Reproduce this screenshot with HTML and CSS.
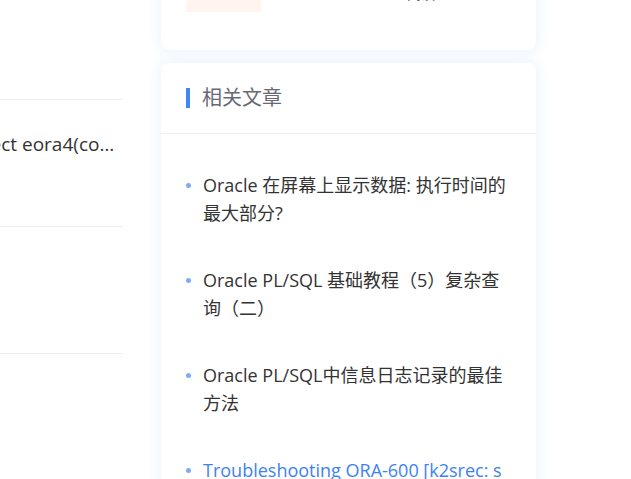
FILE: index.html
```html
<!DOCTYPE html>
<html lang="zh-CN">
<head>
    <meta charset="UTF-8">
    <meta name="viewport" content="width=device-width, initial-scale=1.0">
    <title>相关文章</title>
    <link rel="stylesheet" href="styles.css">
</head>
<body>
    <div class="page">
        <div class="main">
            <ul class="post-list">
                <li class="post">
                    <h3 class="post-title">Oracle 中的序列与触发器</h3>
                    <p class="post-meta">2020-03-16</p>
                </li>
                <li class="post">
                    <h3 class="post-title">在存储过程中动态执行查询语句时出现权限不足的错误提示之后我们尝试select eora4(contents) from dual</h3>
                    <p class="post-meta">2020-03-15</p>
                </li>
                <li class="post">
                    <h3 class="post-title">Oracle 表空间扩容</h3>
                    <p class="post-meta">2020-03-14</p>
                </li>
                <li class="post">
                    <h3 class="post-title">数据泵导入导出</h3>
                    <p class="post-meta">2020-03-12</p>
                </li>
            </ul>
        </div>

        <aside class="side">
            <div class="card card-info">
                <div class="info-row">
                    <span class="tag">置顶</span>
                    <span class="info-date">2020-03-18 · 阅读</span>
                </div>
            </div>

            <div class="card">
                <div class="card-head">
                    <h3 class="card-title">相关文章</h3>
                </div>
                <ul class="rel-list">
                    <li><a href="#">Oracle 在屏幕上显示数据: 执行时间的最大部分?</a></li>
                    <li><a href="#">Oracle PL/SQL 基础教程（5）复杂查询（二）</a></li>
                    <li><a href="#">Oracle PL/SQL中信息日志记录的最佳方法</a></li>
                    <li class="active"><a href="#">Troubleshooting ORA-600 [k2srec: smon] 错误排查</a></li>
                </ul>
            </div>
        </aside>
    </div>
</body>
</html>
```

FILE: styles.css
```css
body { margin: 0; background: #fff; color: #333; font-family: "Open Sans", "Noto Sans CJK SC", sans-serif; overflow: hidden; }
ul { list-style: none; margin: 0; padding: 0; }
a { text-decoration: none; color: inherit; }

.page { display: flex; align-items: flex-start; }

/* left column, scrolled mostly out of view */
.main { flex: none; width: 790px; margin-left: -642px; margin-top: -27px; padding-right: 25px; box-sizing: border-box; background: #fff; position: relative; z-index: 1; }
.post { padding: 30px 0 36px; border-bottom: 1px solid #eeeeee; }
.post-title { margin: 0; padding-right: 5px; font-size: 19px; font-weight: normal; line-height: 28px; white-space: nowrap; overflow: hidden; text-overflow: ellipsis; color: #333; }
.post-meta { margin: 10px 0 0; font-size: 13px; line-height: 22px; color: #999; }

/* sidebar */
.side { flex: none; width: 375px; margin-left: 13px; margin-top: -33px; }
.card { background: #fff; border-radius: 8px; box-shadow: 0 0 14px 3px #edf4ff; margin-bottom: 13px; }
.card-info { padding: 15px 25px 38px; }
.info-row { display: flex; align-items: flex-start; gap: 62px; }
.tag { width: 75px; line-height: 22px; padding-bottom: 8px; background: #fff5ee; color: #999; font-size: 14px; text-align: center; }
.info-date { font-size: 14px; line-height: 23px; color: #555; }

.card-head { padding: 25px; border-bottom: 1px solid #f0f0f0; }
.card-title { margin: 0; display: flex; align-items: center; gap: 12px; font-size: 20px; font-weight: normal; line-height: 20px; color: #676a76; }
.card-title::before { content: ""; width: 4px; height: 20px; background: #3f86f6; }

.rel-list { padding: 18px 25px; }
.rel-list li { position: relative; padding: 19px 0 20px 17px; font-size: 18px; line-height: 28px; word-break: break-all; }
.rel-list li::before { content: ""; position: absolute; left: 0; top: 31px; width: 5px; height: 5px; border-radius: 50%; background: #80abf3; }
.rel-list li.active a { color: #3d82f3; }
```
